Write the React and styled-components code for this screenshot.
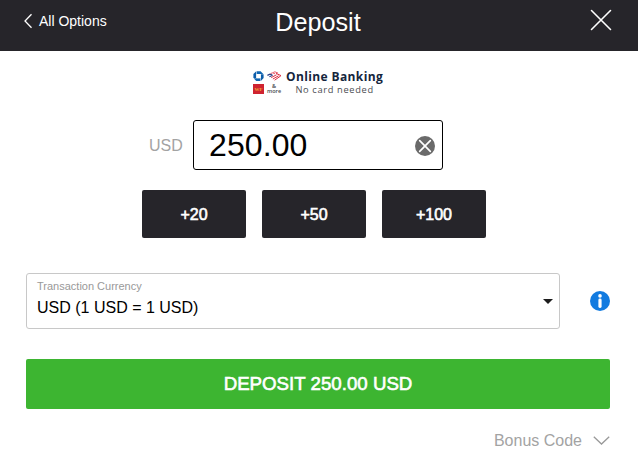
import { useState } from "react";
import styled, { createGlobalStyle } from "styled-components";

const GlobalStyle = createGlobalStyle`
  * {
    box-sizing: border-box;
  }

  body {
    margin: 0;
    background-color: #fff;
    font-family: "Liberation Sans", Arial, sans-serif;
  }

  button, input {
    font-family: inherit;
  }
`;

const Page = styled.div`
  width: 638px;
  height: 466px;
  overflow: hidden;
`;

const Header = styled.header`
  display: grid;
  grid-template-columns: 1fr auto 1fr;
  align-items: center;
  height: 51px;
  padding: 0 26px 8px 23px;
  background-color: #26252a;
  color: #fff;
`;

const BackButton = styled.button`
  display: flex;
  align-items: center;
  gap: 6px;
  margin-top: -1px;
  padding: 0;
  border: none;
  background: none;
  color: #fff;
  font-size: 14px;
  line-height: 16px;
  cursor: pointer;
`;

const Title = styled.h1`
  margin: 0;
  padding-left: 1px;
  font-size: 25.2px;
  font-weight: 400;
  line-height: 28px;
`;

const CloseButton = styled.button`
  display: flex;
  justify-self: end;
  margin-top: -3px;
  padding: 0;
  border: none;
  background: none;
  cursor: pointer;
`;

const Main = styled.main`
  padding: 19px 28px 0 26px;
`;

const Method = styled.div`
  display: flex;
  gap: 5px;
  height: 26px;
  margin-left: 227px;
`;

const BankLogos = styled.div`
  display: grid;
  grid-template-columns: 11px 14px;
  grid-template-rows: 13px 12px;
  column-gap: 3px;
`;

const More = styled.span`
  display: flex;
  flex-direction: column;
  align-items: center;
  padding-top: 1px;
  color: #45484d;
  font-family: "Open Sans", sans-serif;
  font-size: 5.5px;
  font-weight: 600;
  line-height: 5px;
`;

const MethodText = styled.div`
  display: flex;
  flex-direction: column;
  align-items: center;
  font-family: "Open Sans", sans-serif;
  white-space: nowrap;
`;

const MethodName = styled.strong`
  color: #14253c;
  font-size: 12px;
  font-weight: 700;
  letter-spacing: 0.38px;
  line-height: 14px;
`;

const MethodNote = styled.span`
  color: #4b4d52;
  font-size: 9.3px;
  font-weight: 500;
  letter-spacing: 0.65px;
  line-height: 12px;
`;

const AmountRow = styled.div`
  display: flex;
  align-items: center;
  gap: 10px;
  margin: 24px 0 0 123px;
`;

const AmountLabel = styled.label`
  width: 34px;
  padding-top: 2px;
  color: #a3a3a3;
  font-size: 16px;
`;

const AmountField = styled.div`
  display: flex;
  align-items: center;
  width: 250px;
  height: 50px;
  padding: 0 7px 0 15px;
  border: 1px solid #000;
  border-radius: 3px;
`;

const AmountInput = styled.input.attrs({
  type: "text",
  autoComplete: "off",
})`
  flex: 1;
  min-width: 0;
  padding: 0;
  border: none;
  outline: none;
  background: none;
  color: #000;
  font-size: 32px;
  letter-spacing: 0.1px;
`;

const ClearButton = styled.button`
  display: flex;
  margin-top: 2px;
  padding: 0;
  border: none;
  background: none;
  cursor: pointer;
`;

const QuickAmounts = styled.div`
  display: flex;
  gap: 16px;
  margin: 20px 0 0 116px;
`;

const QuickButton = styled.button`
  width: 104px;
  height: 48px;
  padding: 2px 0 0;
  border: none;
  border-radius: 2px;
  background-color: #26252a;
  color: #fff;
  font-size: 16px;
  -webkit-text-stroke: 0.6px #fff;
  cursor: pointer;
`;

const CurrencyRow = styled.div`
  display: flex;
  align-items: center;
  gap: 30px;
  margin-top: 35px;
`;

const CurrencySelect = styled.div`
  display: flex;
  align-items: center;
  justify-content: space-between;
  width: 534px;
  height: 56px;
  padding: 0 6px 0 10px;
  border: 1px solid #c8c8c8;
  border-radius: 3px;
`;

const CurrencyText = styled.div`
  padding-bottom: 7px;
`;

const CurrencyLabel = styled.div`
  color: #999;
  font-size: 11px;
  line-height: 14px;
`;

const CurrencyValue = styled.div`
  margin-top: 6px;
  color: #000;
  font-size: 16px;
  line-height: 18px;
`;

const SubmitButton = styled.button`
  display: block;
  width: 100%;
  height: 50px;
  margin-top: 30px;
  padding: 0;
  border: none;
  border-radius: 2px;
  background-color: #3db531;
  color: #fff;
  font-size: 18.7px;
  -webkit-text-stroke: 0.6px #fff;
  cursor: pointer;
`;

const BonusButton = styled.button`
  display: flex;
  align-items: center;
  gap: 11px;
  margin: 22px 0 0 auto;
  padding: 0;
  border: none;
  background: none;
  color: #a3a3a3;
  font-size: 16px;
  line-height: 20px;
  cursor: pointer;
`;

const BonusArrow = styled.svg`
  margin-top: -1px;
`;

const BackIcon = () => (
  <svg width="10" height="16" viewBox="0 0 10 16" fill="none">
    <path d="M8.5 1.3 2 8l6.5 6.7" stroke="#fff" strokeWidth="1.3" />
  </svg>
);

const CloseIcon = () => (
  <svg width="22" height="22" viewBox="0 0 22 22" fill="none">
    <path
      d="m1.5 1.5 19 19m0-19-19 19"
      stroke="#fff"
      strokeWidth="1.6"
      strokeLinecap="round"
    />
  </svg>
);

const ClearIcon = () => (
  <svg width="20" height="20" viewBox="0 0 20 20" fill="none">
    <circle cx="10" cy="10" r="10" fill="#6a6a6a" />
    <path
      d="m4.7 4.7 10.6 10.6m0-10.6L4.7 15.3"
      stroke="#fff"
      strokeWidth="1.7"
      strokeLinecap="round"
    />
  </svg>
);

const InfoIcon = () => (
  <svg width="20" height="20" viewBox="0 0 20 20">
    <circle cx="10" cy="10" r="10" fill="#127be0" />
    <circle cx="10" cy="4.9" r="1.8" fill="#fff" />
    <rect x="8.4" y="7.5" width="3.2" height="9.5" rx="1.4" fill="#fff" />
  </svg>
);

const ChaseLogo = () => (
  <svg width="11" height="12" viewBox="0 0 11 12">
    <path d="M3.7 1.2h3.9L10.3 4H3.7z" fill="#1166b2" />
    <path d="M10.6 4.2v3.9L7.8 10.9V4.2z" fill="#0b5ca9" />
    <path d="M7.4 11H3.3L.6 8.3h6.8z" fill="#1166b2" />
    <path d="M.4 8V4.1l2.8-2.8V8z" fill="#0b5ca9" />
    <path d="M3.6 4.2h4.1v4H3.6z" fill="#fff" />
  </svg>
);

const BankOfAmericaLogo = () => (
  <svg width="15" height="12" viewBox="0 0 15 12" fill="none">
    <path d="m.4 5.4 2.6-1.2 2.2.9M2.4 6.7l3.2-1.5" stroke="#2b3f86" strokeWidth="1.2" />
    <path d="m3.6 3.6 1.9-.8 2.6 1.1M6.2 2.5l1.7-.7 3.2 1.3" stroke="#e4475a" strokeWidth="0.9" />
    <path
      d="m4.2 7.6 5.3-2.8m-3.6 4.2 5.7-3.2m-4 4.4 6.2-4.3M9 3.4l5 2.2"
      stroke="#dc2d42"
      strokeWidth="1"
    />
  </svg>
);

const WellsFargo = styled.span`
  display: flex;
  align-items: center;
  justify-content: center;
  width: 11px;
  height: 10px;
  margin-top: 1px;
  background-color: #cf2330;
  color: #f4a63a;
  font-family: "Liberation Serif", serif;
  font-size: 5px;
  font-weight: 700;
  line-height: 5px;
`;

const App = () => {
  const [amount, setAmount] = useState("250.00");

  const add = (value) => {
    setAmount(((parseFloat(amount) || 0) + value).toFixed(2));
  };

  return (
    <>
      <GlobalStyle />
      <Page>
        <Header>
          <BackButton>
            <BackIcon />
            All Options
          </BackButton>
          <Title>Deposit</Title>
          <CloseButton aria-label="Close">
            <CloseIcon />
          </CloseButton>
        </Header>
        <Main>
          <Method>
            <BankLogos>
              <ChaseLogo />
              <BankOfAmericaLogo />
              <WellsFargo>WF</WellsFargo>
              <More>
                <span>&amp;</span>
                <span>more</span>
              </More>
            </BankLogos>
            <MethodText>
              <MethodName>Online Banking</MethodName>
              <MethodNote>No card needed</MethodNote>
            </MethodText>
          </Method>

          <AmountRow>
            <AmountLabel htmlFor="amount">USD</AmountLabel>
            <AmountField>
              <AmountInput
                id="amount"
                value={amount}
                onChange={(e) => setAmount(e.target.value)}
              />
              <ClearButton aria-label="Clear" onClick={() => setAmount("")}>
                <ClearIcon />
              </ClearButton>
            </AmountField>
          </AmountRow>

          <QuickAmounts>
            {[20, 50, 100].map((value) => (
              <QuickButton key={value} onClick={() => add(value)}>
                +{value}
              </QuickButton>
            ))}
          </QuickAmounts>

          <CurrencyRow>
            <CurrencySelect>
              <CurrencyText>
                <CurrencyLabel>Transaction Currency</CurrencyLabel>
                <CurrencyValue>USD (1 USD = 1 USD)</CurrencyValue>
              </CurrencyText>
              <svg width="10" height="5" viewBox="0 0 10 5">
                <path d="M0 0h10L5 5z" fill="#1c1c1c" />
              </svg>
            </CurrencySelect>
            <InfoIcon />
          </CurrencyRow>

          <SubmitButton>DEPOSIT {amount} USD</SubmitButton>
          <BonusButton>
            Bonus Code
            <BonusArrow width="17" height="9" viewBox="0 0 17 9" fill="none">
              <path d="m.8.8 7.7 7.2L16.2.8" stroke="#999" strokeWidth="1.3" />
            </BonusArrow>
          </BonusButton>
        </Main>
      </Page>
    </>
  );
};

export default App;
